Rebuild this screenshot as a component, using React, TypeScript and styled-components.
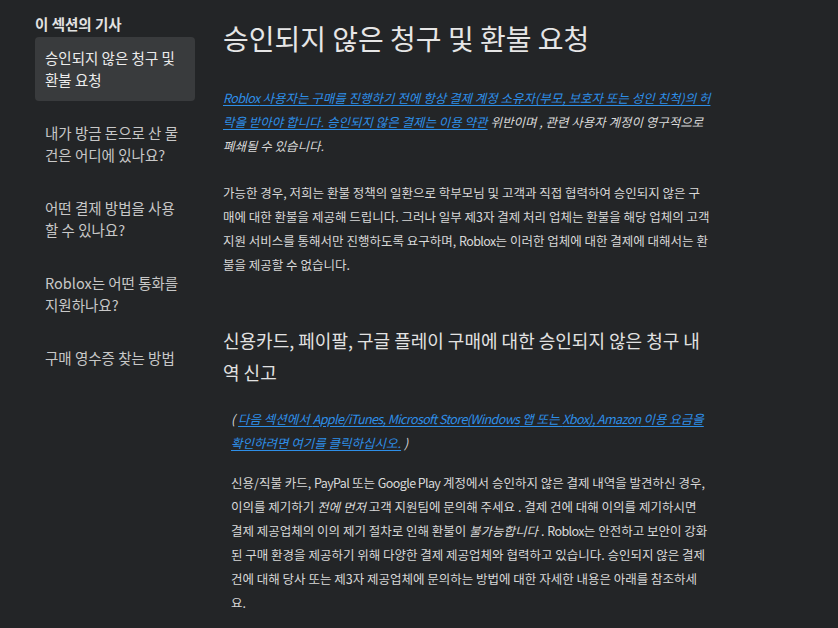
import React from 'react';
import styled, { createGlobalStyle } from 'styled-components';

const GlobalStyle = createGlobalStyle`
  html, body {
    margin: 0;
    padding: 0;
    background: #232527;
  }
  body {
    font-family: "Noto Sans CJK KR", "Noto Sans", sans-serif;
    color: #d6d6d6;
  }
`;

const Page = styled.div`
  display: flex;
  align-items: flex-start;
  gap: 28px;
  padding: 14px 0 0 35px;
  min-height: 628px;
  box-sizing: border-box;
`;

const Sidebar = styled.nav`
  width: 160px;
  flex-shrink: 0;
`;

const SidebarTitle = styled.div`
  font-size: 14.5px;
  font-weight: 700;
  line-height: 20px;
  color: #e2e2e2;
  margin-bottom: 3px;
`;

const SidebarList = styled.ul`
  list-style: none;
  margin: 0;
  padding: 0;
`;

const SidebarItem = styled.li<{ $active?: boolean }>`
  padding: 10px;
  margin-bottom: 11px;
  border-radius: 4px;
  font-size: 14.5px;
  line-height: 22px;
  color: ${(p) => (p.$active ? '#ececec' : '#c8c8c8')};
  background: ${(p) => (p.$active ? '#393b3d' : 'transparent')};
  cursor: pointer;
`;

const Article = styled.main`
  width: 488px;
  flex-shrink: 0;
`;

const Title = styled.h1`
  margin: 4px 0 28px;
  font-size: 28px;
  font-weight: 400;
  line-height: 40px;
  color: #e6e6e6;
`;

const Paragraph = styled.p<{ $italic?: boolean; $gap?: number }>`
  margin: 0 0 ${(p) => p.$gap ?? 23}px;
  font-size: 12.5px;
  line-height: 24px;
  font-style: ${(p) => (p.$italic ? 'italic' : 'normal')};
  color: #d8d8d8;
`;

// latin names in the copy run a little tighter than the hangul around them
const Latin = styled.span`
  letter-spacing: -0.6px;
`;

const Link = styled.a`
  color: #2e8fe8;
  text-decoration: underline;
  text-underline-offset: 2px;
  cursor: pointer;
`;

const SectionTitle = styled.h2`
  margin: 47px 0 19px;
  font-size: 18px;
  font-weight: 400;
  line-height: 32px;
  color: #e2e2e2;
`;

const SectionBody = styled.div`
  padding: 0 2.5px 0 8px;
`;

const Emph = styled.em`
  font-style: italic;
`;

const navItems = [
  '승인되지 않은 청구 및 환불 요청',
  '내가 방금 돈으로 산 물건은 어디에 있나요?',
  '어떤 결제 방법을 사용할 수 있나요?',
  'Roblox는 어떤 통화를 지원하나요?',
  '구매 영수증 찾는 방법',
];

export default function App() {
  return (
    <>
      <GlobalStyle />
      <Page>
        <Sidebar>
          <SidebarTitle>이 섹션의 기사</SidebarTitle>
          <SidebarList>
            {navItems.map((item, i) => (
              <SidebarItem key={item} $active={i === 0}>
                {item}
              </SidebarItem>
            ))}
          </SidebarList>
        </Sidebar>

        <Article>
          <Title>승인되지 않은 청구 및 환불 요청</Title>

          <Paragraph $italic>
            <Link>
              <Latin>Roblox</Latin> 사용자는 구매를 진행하기 전에 항상 결제 계정 소유자(부모, 보호자 또는 성인 친척)의 허락을 받아야 합니다. 승인되지 않은 결제는 이용 약관
            </Link>{' '}
            위반이며 , 관련 사용자 계정이 영구적으로 폐쇄될 수 있습니다.
          </Paragraph>

          <Paragraph>
            가능한 경우, 저희는 환불 정책의 일환으로 학부모님 및 고객과 직접 협력하여 승인되지 않은 구매에 대한 환불을 제공해 드립니다. 그러나 일부 제3자 결제 처리 업체는 환불을 해당 업체의 고객 지원 서비스를 통해서만 진행하도록 요구하며, <Latin>Roblox</Latin>는 이러한 업체에 대한 결제에 대해서는 환불을 제공할 수 없습니다.
          </Paragraph>

          <SectionTitle>신용카드, 페이팔, 구글 플레이 구매에 대한 승인되지 않은 청구 내역 신고</SectionTitle>

          <SectionBody>
            <Paragraph $italic $gap={16}>
              ({' '}
              <Link>
                다음 섹션에서 <Latin>Apple/iTunes, Microsoft Store(Windows</Latin> 앱 또는 <Latin>Xbox), Amazon</Latin> 이용 요금을 확인하려면 여기를 클릭하십시오.
              </Link>{' '}
              )
            </Paragraph>

            <Paragraph>
              신용/직불 카드, <Latin>PayPal</Latin> 또는 <Latin>Google Play</Latin> 계정에서 승인하지 않은 결제 내역을 발견하신 경우, 이의를 제기하기 <Emph>전에 먼저</Emph> 고객 지원팀에 문의해 주세요 . 결제 건에 대해 이의를 제기하시면 결제 제공업체의 이의 제기 절차로 인해 환불이 <Emph>불가능합니다</Emph> . <Latin>Roblox</Latin>는 안전하고 보안이 강화된 구매 환경을 제공하기 위해 다양한 결제 제공업체와 협력하고 있습니다. 승인되지 않은 결제 건에 대해 당사 또는 제3자 제공업체에 문의하는 방법에 대한 자세한 내용은 아래를 참조하세요.
            </Paragraph>
          </SectionBody>
        </Article>
      </Page>
    </>
  );
}
